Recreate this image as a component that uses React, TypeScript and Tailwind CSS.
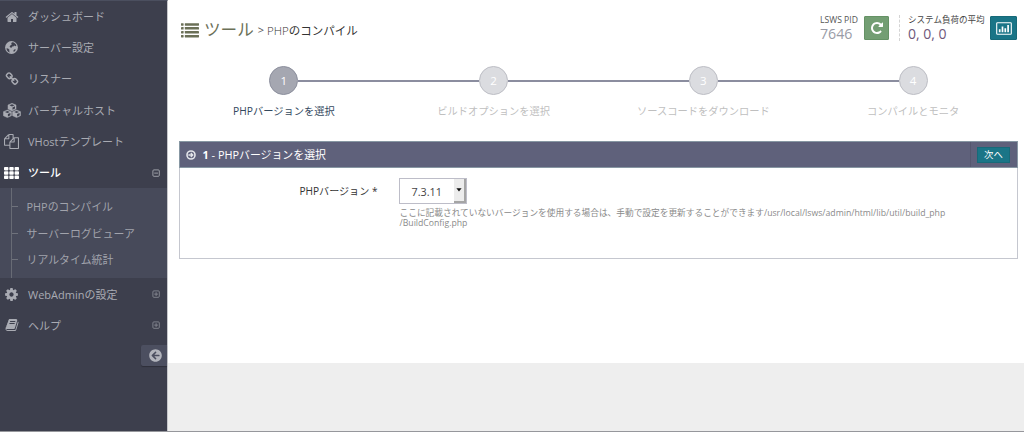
import React from "react";
import { FaArrowCircleLeft } from "react-icons/fa";

const PATHS = {
  home: "M1472 992v480q0 26-19 45t-45 19h-384v-384h-256v384h-384q-26 0-45-19t-19-45v-480q0-1 .5-3t.5-3l575-474 575 474q1 2 1 6zm223-69l-62 74q-8 9-21 11h-3q-13 0-21-7l-692-577-692 577q-12 8-24 7-13-2-21-11l-62-74q-8-10-7-23.5t11-21.5l719-599q32-26 76-26t76 26l244 204v-195q0-14 9-23t23-9h192q14 0 23 9t9 23v408l219 182q10 8 11 21.5t-7 23.5z",
  link: "M1520 1216q0-40-28-68l-208-208q-28-28-68-28-42 0-72 32 3 3 19 18.5t21.5 21.5 15 19 13 25.5 3.5 27.5q0 40-28 68t-68 28q-15 0-27.5-3.5t-25.5-13-19-15-21.5-21.5-18.5-19q-33 31-33 73 0 40 28 68l206 207q27 27 68 27 40 0 68-26l147-146q28-28 28-67zm-703-705q0-40-28-68l-206-207q-28-28-68-28-39 0-68 27l-147 146q-28 28-28 67 0 40 28 68l208 208q27 27 68 27 42 0 72-31-3-3-19-18.5t-21.5-21.5-15-19-13-25.5-3.5-27.5q0-40 28-68t68-28q15 0 27.5 3.5t25.5 13 19 15 21.5 21.5 18.5 19q33-31 33-73zm895 705q0 120-85 203l-147 146q-83 83-203 83-121 0-204-85l-206-207q-83-83-83-203 0-123 88-209l-88-88q-86 88-208 88-120 0-204-84l-208-208q-84-84-84-204t85-203l147-146q83-83 203-83 121 0 204 85l206 207q83 83 83 203 0 123-88 209l88 88q86-88 208-88 120 0 204 84l208 208q84 84 84 204z",
  copy: "M1696 384q40 0 68 28t28 68v1216q0 40-28 68t-68 28h-960q-40 0-68-28t-28-68v-288h-544q-40 0-68-28t-28-68v-672q0-40 20-88t48-76l408-408q28-28 76-48t88-20h416q40 0 68 28t28 68v328q68-40 128-40h416zm-544 213l-299 299h299v-299zm-640-384l-299 299h299v-299zm196 647l316-316v-416h-384v416q0 40-28 68t-68 28h-416v640h512v-256q0-40 20-88t48-76zm956 804v-1152h-384v416q0 40-28 68t-68 28h-416v640h896z",
  cog: "M1152 896q0-106-75-181t-181-75-181 75-75 181 75 181 181 75 181-75 75-181zm512-109v222q0 12-8 23t-20 13l-185 28q-19 54-39 91 35 50 107 138 10 12 10 25t-9 23q-27 37-99 108t-94 71q-12 0-26-9l-138-108q-44 23-91 38-16 136-29 186-7 28-36 28h-222q-14 0-24.5-8.5t-11.5-21.5l-28-184q-49-16-90-37l-141 107q-10 9-25 9-14 0-25-11-126-114-165-168-7-10-7-23 0-12 8-23 15-21 51-66.5t54-70.5q-27-50-41-99l-183-27q-13-2-21-12.5t-8-23.5v-222q0-12 8-23t19-13l186-28q14-46 39-92-40-57-107-138-10-12-10-24 0-10 9-23 26-36 98.5-107.5t94.5-71.5q13 0 26 10l138 107q44-23 91-38 16-136 29-186 7-28 36-28h222q14 0 24.5 8.5t11.5 21.5l28 184q49 16 90 37l142-107q9-9 24-9 13 0 25 10 129 119 165 170 7 8 7 22 0 12-8 23-15 21-51 66.5t-54 70.5q26 50 41 98l183 28q13 2 21 12.5t8 23.5z",
  book: "M1703 478q40 57 18 129l-275 906q-19 64-76.5 107.5t-122.5 43.5h-923q-77 0-148.5-53.5t-99.5-131.5q-24-67-2-127 0-4 3-27t4-37q1-8-3-21.5t-3-19.5q2-11 8-21t16.5-23.5 16.5-23.5q23-38 45-91.5t30-91.5q3-10 .5-30t-.5-28q3-11 17-28t17-23q21-36 42-92t25-90q1-9-2.5-32t.5-28q4-13 22-30.5t22-22.5q19-26 42.5-84.5t27.5-96.5q1-8-3-25.5t-2-26.5q2-8 9-18t18-23 17-21q8-12 16.5-30.5t15-35 16-36 19.5-32 26.5-23.5 36-11.5 47.5 5.5l-1 3q38-9 51-9h761q74 0 114 56t18 130l-274 906q-36 119-71.5 153.5t-128.5 34.5h-869q-27 0-38 15-11 16-1 43 24 70 144 70h923q29 0 56-15.5t35-41.5l300-987q7-22 5-57 38 15 59 43zm-1064 2q-4 13 2 22.5t20 9.5h608q13 0 25.5-9.5t16.5-22.5l21-64q4-13-2-22.5t-20-9.5h-608q-13 0-25.5 9.5t-16.5 22.5zm-83 256q-4 13 2 22.5t20 9.5h608q13 0 25.5-9.5t16.5-22.5l21-64q4-13-2-22.5t-20-9.5h-608q-13 0-25.5 9.5t-16.5 22.5z",
  repeat: "M1664 256v448q0 26-19 45t-45 19h-448q-42 0-59-40-17-39 14-69l138-138q-148-137-349-137-104 0-198.5 40.5t-163.5 109.5-109.5 163.5-40.5 198.5 40.5 198.5 109.5 163.5 163.5 109.5 198.5 40.5q119 0 225-52t179-147q7-10 23-12 15 0 25 9l137 138q9 8 9.5 20.5t-7.5 22.5q-109 132-264 204.5t-327 72.5q-156 0-298-61t-245-164-164-245-61-298 61-298 164-245 245-164 298-61q147 0 284.5 55.5t244.5 156.5l130-129q29-31 70-14 39 17 39 59z",
};

function Glyph({ name, className }: { name: keyof typeof PATHS; className: string }) {
  return (
    <svg viewBox="0 0 1792 1792" fill="currentColor" className={className}>
      <path d={PATHS[name]} />
    </svg>
  );
}

function GlobeIcon() {
  return (
    <svg viewBox="0 0 13 13" className="size-[13px]">
      <circle cx="6.5" cy="6.5" r="6.4" fill="currentColor" />
      <path d="M7 1.2 8.8 1.6 10.6 3 11.4 4.6 10.4 5.2 9.2 4.6 8.4 5.4 7.2 5.6 6.6 6.8 5.2 6.6 4.6 5.4 5.6 4.2 6.8 3.6 6.2 2.4Z" fill="#3d3f4d" />
      <path d="M1.5 7.2 3 7.6 4.4 8.8 4.2 10.2 5 11.6 3.2 10.8 1.8 9Z" fill="#3d3f4d" />
      <path d="M9.2 8.6 10.8 8.2 10.2 9.8 8.8 11 8.4 9.8Z" fill="#3d3f4d" />
    </svg>
  );
}

function CubesIcon() {
  const cubes = [
    [5, 0.3],
    [0.4, 7],
    [9.6, 7],
  ];
  return (
    <svg viewBox="0 0 18 15" className="h-[15px] w-[18px]">
      {cubes.map(([x, y]) => (
        <g key={`${x}-${y}`} transform={`translate(${x} ${y})`}>
          <path d="M4 0 8 1.7v4L4 7.6 0 5.7v-4z" fill="currentColor" stroke="currentColor" strokeWidth="0.5" strokeLinejoin="round" />
          <path d="M1.5 2 4 1l2.5 1L4 3.1zM4.5 4.1 7 3v2.2L4.5 6.4z" fill="#3d3f4d" />
        </g>
      ))}
    </svg>
  );
}

function GridIcon() {
  return (
    <svg viewBox="0 0 15 12" fill="currentColor" className="h-3 w-[15px]">
      {[0, 4.3, 8.6].map((y) =>
        [0, 5.3, 10.6].map((x) => <rect key={`${x}-${y}`} x={x} y={y} width="4.4" height="3.4" rx="0.8" />)
      )}
    </svg>
  );
}

function ListIcon() {
  return (
    <svg viewBox="0 0 18 15" fill="currentColor" className="h-[15px] w-[18px] shrink-0">
      {[0.2, 4.1, 8, 11.9].map((y) => (
        <g key={y}>
          <rect x="0" y={y} width="2.6" height="2.5" rx="0.4" />
          <rect x="3.8" y={y} width="14.2" height="2.5" rx="0.4" />
        </g>
      ))}
    </svg>
  );
}

function ToggleIcon({ open }: { open?: boolean }) {
  return (
    <svg viewBox="0 0 8 8" fill="none" stroke="currentColor" className="mr-[7px] h-2 w-2 shrink-0">
      <rect x="0.9" y="0.9" width="6.4" height="6.4" rx="1" strokeWidth="0.8" />
      <path d={open ? "M2.2 4.1h3.8" : "M2.2 4.1h3.8M4.1 2.2v3.8"} strokeWidth="0.8" />
    </svg>
  );
}

function NavItem({ icon, label, toggle, active }: {
  icon: React.ReactNode;
  label: string;
  toggle?: "open" | "closed";
  active?: boolean;
}) {
  return (
    <li className={`flex h-[31.2px] items-center ${active ? "font-medium text-white" : "text-[#a9abb3]"}`}>
      <span className="flex w-[23px] shrink-0 items-center justify-center">{icon}</span>
      <span className="ml-[5px] flex-1">{label}</span>
      {toggle && (
        <span className={toggle === "open" ? "text-[#b4b6bd]" : "text-[#8e9099]"}>
          <ToggleIcon open={toggle === "open"} />
        </span>
      )}
    </li>
  );
}

const SUB_ITEMS = ["PHPのコンパイル", "サーバーログビューア", "リアルタイム統計"];

function Sidebar() {
  return (
    <nav className="flex h-full w-[168px] shrink-0 flex-col border-t border-r border-t-[#4b4f5f] border-r-[#c6c7cb] bg-[#3d3f4d] text-[11px] leading-[15px] whitespace-nowrap">
      <ul>
        <NavItem icon={<Glyph name="home" className="size-[14px]" />} label="ダッシュボード" />
        <NavItem icon={<GlobeIcon />} label="サーバー設定" />
        <NavItem icon={<Glyph name="link" className="size-[14px]" />} label="リスナー" />
        <NavItem icon={<CubesIcon />} label="バーチャルホスト" />
        <NavItem icon={<Glyph name="copy" className="size-[15px]" />} label="VHostテンプレート" />
        <NavItem icon={<GridIcon />} label="ツール" toggle="open" active />
      </ul>
      <ul className="flex h-[90px] bg-[#474a5a]">
        <li className="ml-[11px] h-full w-px bg-[#686b75]" />
        <li className="flex-1 pt-[5px]">
          <ul>
            {SUB_ITEMS.map((item) => (
              <li key={item} className="flex h-[26.6px] items-center text-[10.9px] text-[#a1a3ac]">
                <span className="h-px w-[6px] bg-[#6f727c]" />
                <span className="ml-[8.5px]">{item}</span>
              </li>
            ))}
          </ul>
        </li>
      </ul>
      <ul className="pt-[0.5px]">
        <NavItem icon={<Glyph name="cog" className="size-[15px]" />} label="WebAdminの設定" toggle="closed" />
        <NavItem icon={<Glyph name="book" className="size-[14px]" />} label="ヘルプ" toggle="closed" />
      </ul>
      <button className="mt-[4px] flex h-[21px] w-[26px] items-center justify-center self-end rounded-l-[2px] bg-[#4c4f60] pl-[3px] text-[#b2b4bc] shadow-[0_1px_1px_rgba(0,0,0,0.25)]">
        <FaArrowCircleLeft className="size-[13px]" />
      </button>
    </nav>
  );
}

function Header() {
  return (
    <header className="flex h-[43px] shrink-0 pl-[13px] whitespace-nowrap">
      <h1 className="flex flex-1 items-center pt-[17px] text-[#6b7057]">
        <ListIcon />
        <span className="ml-[5px] text-[16.6px] leading-5">ツール</span>
        <span className="ml-[4px] text-[11px] leading-5 text-[#555]">&gt;</span>
        <span className="ml-[3px] pt-px text-[11.5px] leading-5 font-light text-[#333]">PHP<span className="font-normal">のコンパイル</span></span>
      </h1>
      <div className="flex pt-[15px]">
        <div className="w-[44px]">
          <div className="text-[8.6px] leading-[10px] text-[#555]">LSWS PID</div>
          <div className="text-[14.2px] leading-[17px] text-[#999ba6]">7646</div>
        </div>
        <button className="mt-px flex h-6 w-[25px] items-center justify-center rounded-[1px] border border-[#659265] bg-[#739e73] text-white">
          <Glyph name="repeat" className="size-[14px]" />
        </button>
        <div className="ml-[10px] h-[26px] w-px border-l border-dashed border-[#d4d4d4]" />
        <div className="ml-[8px] w-[82px]">
          <div className="text-[8.55px] leading-[10px] text-[#444]">システム負荷の平均</div>
          <div className="text-[14px] leading-[17px] text-[#6e587a]">0, 0, 0</div>
        </div>
        <button className="mt-px mr-[7px] flex h-6 w-[27px] items-center justify-center rounded-[1px] border border-[#176a79] bg-[#1a7587] text-white">
          <svg viewBox="0 0 16 13" fill="none" stroke="currentColor" className="h-[13px] w-4">
            <rect x="0.7" y="0.7" width="14.6" height="11.6" rx="0.8" strokeWidth="1.1" />
            <path d="M3.7 10.3V7.3M6.5 10.3V4.6M9.3 10.3V6.2M12.1 10.3V3" strokeWidth="1.7" />
          </svg>
        </button>
      </div>
    </header>
  );
}

const STEPS = ["PHPバージョンを選択", "ビルドオプションを選択", "ソースコードをダウンロード", "コンパイルとモニタ"];

function Stepper() {
  return (
    <ol className="mt-[23px] ml-[11px] grid h-[75px] w-[839px] shrink-0 grid-cols-4">
      {STEPS.map((label, i) => (
        <li key={label} className="flex flex-col items-center">
          <div className="flex w-full items-center">
            <span className={`h-[2px] flex-1 ${i === 0 ? "" : "bg-[#8b8d9f]"}`} />
            <span
              className={`flex size-[29px] items-center justify-center rounded-full border text-[11.5px] leading-none text-white ${
                i === 0 ? "border-[#8c8f9d] bg-[#a5a7b1]" : "border-[#bdbec5] bg-[#dbdce0]"
              }`}
            >
              {i + 1}
            </span>
            <span className={`h-[2px] flex-1 ${i === 3 ? "" : "bg-[#8b8d9f]"}`} />
          </div>
          <span className={`mt-[9px] text-[10.25px] leading-[14px] whitespace-nowrap ${i === 0 ? "text-[#34495e]" : "text-[#bfbfbf]"}`}>
            {label}
          </span>
        </li>
      ))}
    </ol>
  );
}

function Panel() {
  return (
    <section className="ml-[10.5px] h-[118px] w-[839.5px] shrink-0 border border-[#c5c7cf]">
      <div className="-mx-px -mt-px flex h-[27px] items-center border border-[#8797a3] bg-[#5f617b] text-[10.9px] text-white">
        <svg viewBox="0 0 10 10" fill="none" stroke="currentColor" className="ml-[6px] size-[10px] text-[#e4e5ea]">
          <circle cx="5" cy="5" r="4" strokeWidth="1.6" />
          <path d="M2.4 5h4M4.8 3 6.8 5 4.8 7" strokeWidth="1.3" />
        </svg>
        <h2 className="ml-[7px] flex-1 pt-[2px] whitespace-nowrap"><b>1</b> - PHPバージョンを選択</h2>
        <div className="flex h-full items-center border-l border-[#55576f] pr-[7px] pl-[6px]">
          <button className="flex h-4 w-[33px] items-center justify-center border border-[#176a79] bg-[#1a7587] text-[9.4px] leading-none">次へ</button>
        </div>
      </div>
      <div className="flex pt-[10px]">
        <label className="w-[198px] pt-[6px] text-right text-[10.1px] leading-[15px] text-[#333]">PHPバージョン *</label>
        <div className="ml-[21px]">
          <div className="flex h-[26px] w-[68px] border border-[#bdbdc8] text-[10.8px] text-[#444]">
            <span className="flex flex-1 items-center pt-[2px] pl-[12px]">7.3.11</span>
            <span className="flex w-3 items-center justify-center border-r-2 border-b-2 border-[#a5a5a5] bg-[#ececec]">
              <svg viewBox="0 0 6 4" className="h-1 w-[6px]"><path d="M0.4 0.3h5.2L3 3.5z" fill="#111" /></svg>
            </span>
          </div>
          <p className="mt-[4px] ml-px text-[8.7px] leading-[10px] whitespace-nowrap text-[#8a8a8a]">
            ここに記載されていないバージョンを使用する場合は、手動で設定を更新することができます/usr/local/lsws/admin/html/lib/util/build_php
            <br />
            /BuildConfig.php
          </p>
        </div>
      </div>
    </section>
  );
}

export default function App() {
  return (
    <div className="flex h-[432px] w-[1024px] flex-col overflow-hidden border-b border-[#96979c] bg-[#eeeeee] font-['Open_Sans','Noto_Sans_CJK_JP',sans-serif]">
      <div className="flex min-h-0 flex-1">
        <Sidebar />
        <main className="flex h-[363px] flex-1 flex-col bg-white">
          <Header />
          <Stepper />
          <Panel />
        </main>
      </div>
    </div>
  );
}
